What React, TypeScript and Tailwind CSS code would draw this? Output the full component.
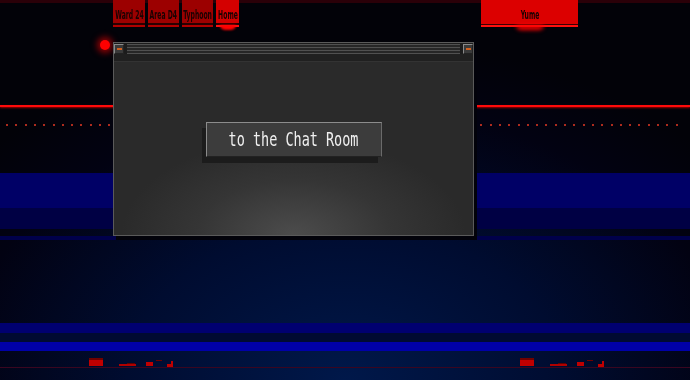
import React from 'react';

const tabs = [
  { label: 'Ward 24', w: 'w-[32px]', active: false },
  { label: 'Area D4', w: 'w-[31px]', active: false },
  { label: 'Typhoon', w: 'w-[31px]', active: false },
  { label: 'Home', w: 'w-[23px]', active: true },
];

const TabLabel: React.FC<{ text: string }> = ({ text }) => (
  <span className="font-['DejaVu_Sans_Condensed'] font-bold text-[13px] leading-[13px] text-[#1a0202] scale-x-[0.52] whitespace-nowrap">
    {text}
  </span>
);

const Tab: React.FC<{ label: string; w: string; active: boolean }> = ({ label, w, active }) => (
  <div className={`relative flex flex-col ${w}`}>
    <div
      className={`h-[23px] flex justify-center pt-[8px] ${active ? 'bg-[#d40000]' : 'bg-[#9c0000]'}`}
    >
      <TabLabel text={label} />
    </div>
    <div className="h-[2px] bg-[#2a0000]" />
    <div className={`h-[2px] ${active ? 'bg-[#ff1010]' : 'bg-[#b00000]'}`} />
    {active && (
      <div className="absolute left-1/2 top-[25px] -translate-x-1/2 w-[16px] h-[5px] rounded-b-full bg-[#ff0000] blur-[1px]" />
    )}
  </div>
);

// little red blips sitting on the bottom line
const Blips: React.FC = () => (
  <div className="relative w-[90px] h-[10px]">
    <div className="absolute left-0 top-0 w-[14px] h-[2px] bg-[#700000]" />
    <div className="absolute left-0 top-[2px] w-[14px] h-[6px] bg-[#c00000]" />
    <div className="absolute left-[30px] top-[6px] w-[17px] h-[2px] bg-[#b00000]" />
    <div className="absolute left-[38px] top-[5px] w-[8px] h-[1px] bg-[#600000]" />
    <div className="absolute left-[57px] top-[4px] w-[7px] h-[4px] bg-[#c00000]" />
    <div className="absolute left-[67px] top-[2px] w-[6px] h-[1px] bg-[#700000]" />
    <div className="absolute left-[78px] top-[6px] w-[6px] h-[3px] bg-[#c00000]" />
    <div className="absolute left-[82px] top-[3px] w-[2px] h-[4px] bg-[#c00000]" />
  </div>
);

const CornerBox: React.FC = () => (
  <div className="w-[10px] h-[10px] bg-[#3a3a3a] border border-t-[#8a8a8a] border-l-[#8a8a8a] border-b-[#222] border-r-[#222] flex items-center justify-center">
    <div className="w-[5px] h-[2px] bg-[#d06020]" />
  </div>
);

export default function App() {
  return (
    <div className="relative w-[690px] h-[380px] overflow-hidden bg-[radial-gradient(ellipse_70%_90%_at_50%_100%,#00184a_0%,#000c30_45%,#020212_80%,#020208_100%)] font-['DejaVu_Sans']">
      {/* top red haze */}
      <div className="absolute inset-x-0 top-0 h-[3px] bg-[#2a0008]" />

      <div className="relative flex flex-col">
        {/* tab row */}
        <div className="h-[27px] flex">
          <div className="ml-[113px] flex gap-[3px]">
            {tabs.map((t) => (
              <Tab key={t.label} {...t} />
            ))}
          </div>
          <div className="ml-[242px] relative w-[97px] flex flex-col">
            <div className="h-[24px] bg-[#dc0000] flex justify-center pt-[8px]">
              <TabLabel text="Yume" />
            </div>
            <div className="h-[1px] bg-[#3a0000]" />
            <div className="h-[2px] bg-[#ff1010]" />
            <div className="absolute left-1/2 top-[25px] -translate-x-1/2 w-[28px] h-[5px] rounded-b-full bg-[#ff0000] blur-[2px]" />
          </div>
        </div>

        <div className="h-[78px]" />
        {/* red scan line */}
        <div className="h-[2px] bg-[#ff0a0a] shadow-[0_1px_2px_#a00000]" />
        <div className="h-[17px]" />
        {/* dotted line */}
        <div className="h-[2px] mx-[6px] bg-[repeating-linear-gradient(90deg,#c03020_0px,#c03020_2px,transparent_2px,transparent_9.3px)] opacity-90" />
        <div className="h-[47px]" />
        {/* blue bands */}
        <div className="h-[35px] bg-[#000066]" />
        <div className="h-[21px] bg-[#000044]" />
        <div className="h-[7px]" />
        <div className="h-[4px] bg-[#00004a]" />
        <div className="h-[83px]" />
        <div className="h-[10px] bg-[#000070]" />
        <div className="h-[9px] bg-[#000a32]" />
        <div className="h-[9px] bg-[#0000a8]" />
        <div className="h-[7px]" />
        <div className="h-[9px] flex">
          <div className="ml-[89px]">
            <Blips />
          </div>
          <div className="ml-[341px]">
            <Blips />
          </div>
        </div>
        <div className="h-[1px] bg-[#3a0620]" />
      </div>

      {/* red indicator dot */}
      <div className="absolute left-[100px] top-[40px] w-[10px] h-[10px] rounded-full bg-[#ff0000] shadow-[0_0_6px_3px_rgba(255,0,0,0.55)]" />

      {/* dialog window */}
      <div className="absolute left-[113px] top-[42px] w-[361px] h-[194px] flex flex-col bg-[#2a2a2a] border border-[#5a5a5a] shadow-[3px_4px_0_#02020a]">
        <div className="h-[11px] flex items-center bg-[#1c1c1c]">
          <CornerBox />
          <div className="flex-1 h-[10px] mx-[3px] bg-[repeating-linear-gradient(180deg,#505050_0px,#505050_1px,#262626_1px,#262626_3px)]" />
          <CornerBox />
        </div>
        <div className="h-[8px] bg-[#202020] border-b border-[#333]" />
        <div className="flex-1 flex items-start justify-center pt-[60px] bg-[radial-gradient(ellipse_60%_70%_at_50%_100%,#4c4c4c_0%,#353535_45%,#2a2a2a_80%)]">
          <div className="shadow-[-4px_6px_0_#1c1c1c]">
            <div className="w-[176px] h-[35px] bg-[#3c3c3c] border border-t-[#8c8c8c] border-l-[#8c8c8c] border-r-[#6a6a6a] border-b-[#222] flex items-center justify-center">
              <span className="font-['DejaVu_Sans_Mono'] text-[19px] text-[#f0f0f0] scale-x-[0.71] whitespace-nowrap">to the Chat Room</span>
            </div>
          </div>
        </div>
      </div>
    </div>
  );
}
